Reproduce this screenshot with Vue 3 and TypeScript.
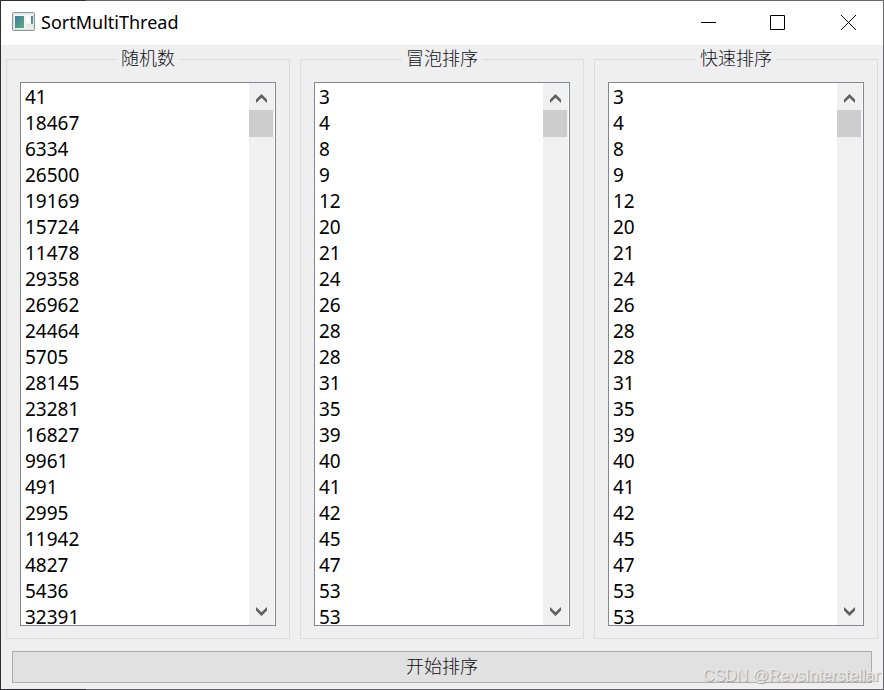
<script setup lang="ts">
import { ref } from 'vue'

interface Column {
  title: string
  values: number[]
}

const sorted = [3, 4, 8, 9, 12, 20, 21, 24, 26, 28, 28, 31, 35, 39, 40, 41, 42, 45, 47, 53, 53]

const columns: Column[] = [
  {
    title: '随机数',
    values: [
      41, 18467, 6334, 26500, 19169, 15724, 11478, 29358, 26962, 24464, 5705,
      28145, 23281, 16827, 9961, 491, 2995, 11942, 4827, 5436, 32391,
    ],
  },
  { title: '冒泡排序', values: sorted },
  { title: '快速排序', values: sorted },
]

const lists = ref<HTMLUListElement[]>([])

function scrollList(index: number, direction: number) {
  lists.value[index]?.scrollBy({ top: direction * 26 })
}
</script>

<template>
  <div class="window">
    <header class="titlebar">
      <svg class="app-icon" width="24" height="20" viewBox="0 0 24 20" aria-hidden="true">
        <defs>
          <linearGradient id="pane" x1="0" y1="0" x2="1" y2="1">
            <stop offset="0" stop-color="#3f7ba6" />
            <stop offset="1" stop-color="#5fae74" />
          </linearGradient>
        </defs>
        <rect x="0.5" y="0.5" width="22" height="18" rx="1" fill="#f2f2f2" stroke="#8f9599" />
        <rect x="1.5" y="1.5" width="20" height="16" fill="none" stroke="#dcdfe1" />
        <rect x="3" y="4" width="9" height="12" fill="url(#pane)" />
        <rect x="14" y="4" width="4" height="7" fill="#fff" />
        <rect x="14" y="12" width="7" height="4" fill="#e6e8e8" />
        <rect x="19" y="4" width="2" height="8" fill="url(#pane)" />
      </svg>
      <h1 class="title">SortMultiThread</h1>
      <div class="controls">
        <button type="button" class="control" aria-label="Minimize">
          <svg width="17" height="17" viewBox="0 0 17 17"><path d="M1 8.5h15" /></svg>
        </button>
        <button type="button" class="control" aria-label="Maximize">
          <svg width="17" height="17" viewBox="0 0 17 17"><path d="M0.5 1.5h14v14h-14z" /></svg>
        </button>
        <button type="button" class="control" aria-label="Close">
          <svg width="17" height="17" viewBox="0 0 17 17"><path d="M1 1l15 15M16 1l-15 15" /></svg>
        </button>
      </div>
    </header>

    <main class="body">
      <div class="groups">
        <fieldset v-for="(column, i) in columns" :key="column.title" class="group">
          <legend class="legend">{{ column.title }}</legend>
          <div class="listbox">
            <ul ref="lists" class="items">
              <li v-for="(value, n) in column.values" :key="n">{{ value }}</li>
            </ul>
            <div class="scrollbar">
              <button type="button" class="arrow" aria-label="Scroll up" @click="scrollList(i, -1)">
                <svg width="11" height="9" viewBox="0 0 11 9"><path d="M5.5 0L11 5.5V9L5.5 3.8L0 9V5.5z" /></svg>
              </button>
              <div class="thumb"></div>
              <button type="button" class="arrow down" aria-label="Scroll down" @click="scrollList(i, 1)">
                <svg width="11" height="9" viewBox="0 0 11 9"><path d="M5.5 9L0 3.5V0L5.5 5.2L11 0V3.5z" /></svg>
              </button>
            </div>
          </div>
        </fieldset>
      </div>
      <button type="button" class="start">开始排序</button>
    </main>
    <span class="watermark">CSDN @RevsInterstellar</span>
  </div>
</template>

<style>
body {
  margin: 0;
}
</style>

<style scoped>
.window {
  position: relative;
  display: flex;
  flex-direction: column;
  box-sizing: border-box;
  height: 100vh;
  padding: 1px;
  overflow: hidden;
  background: linear-gradient(90deg, #2e2d32 86px, #69686c 86px);
  color: #000;
  font-family: "Noto Sans", "Noto Sans CJK SC", sans-serif;
}

.titlebar {
  display: flex;
  align-items: flex-start;
  flex: none;
  height: 44px;
  padding-left: 11px;
  background: #fff;
}

.app-icon {
  flex: none;
  margin-top: 11px;
}

.title {
  flex: 1;
  margin: 0 0 0 5px;
  font-size: 18px;
  font-weight: 400;
  line-height: 42px;
}

.controls {
  display: flex;
}

.control {
  display: flex;
  align-items: center;
  justify-content: center;
  width: 70px;
  height: 43px;
  padding: 0;
  border: 0;
  background: none;
}

.control path {
  fill: none;
  stroke: #000;
  stroke-width: 1;
}

.body {
  display: flex;
  flex: 1;
  flex-direction: column;
  gap: 12px;
  min-height: 0;
  padding: 1px 5px 6px;
  background: #efefef;
}

.groups {
  display: grid;
  flex: 1;
  grid-template-columns: repeat(3, minmax(0, 1fr));
  grid-template-rows: minmax(0, 1fr);
  gap: 10px;
  min-height: 0;
}

.group {
  display: flex;
  flex-direction: column;
  box-sizing: border-box;
  min-width: 0;
  min-height: 0;
  margin: 0;
  padding: 10px 13px 12px;
  border: 1px solid #dcdcdc;
}

.legend {
  margin: 0 auto;
  padding: 0 4px 4px;
  color: #101018;
  font-family: "Noto Sans CJK SC", sans-serif;
  font-size: 18px;
  font-weight: 300;
  line-height: 22px;
}

.listbox {
  display: flex;
  flex: 1;
  min-height: 0;
  padding-right: 1px;
  border: 1px solid #828790;
  background: #fff;
}

.items {
  flex: 1;
  min-width: 0;
  margin: 0;
  padding: 1px 4px 0;
  overflow: hidden;
  list-style: none;
  font-size: 19px;
  line-height: 26px;
}

.scrollbar {
  display: flex;
  flex: none;
  flex-direction: column;
  width: 25px;
  background: #f0f0f0;
}

.arrow {
  display: flex;
  align-items: center;
  justify-content: center;
  height: 27px;
  padding: 4px 0 0;
  border: 0;
  background: none;
}

.arrow path {
  fill: #606060;
}

.thumb {
  width: 24px;
  height: 27px;
  background: #cdcdcd;
}

.down {
  margin-top: auto;
  padding: 0;
}

.start {
  flex: none;
  height: 32px;
  margin: 0 6px;
  padding: 0 0 4px;
  border: 1px solid #adadad;
  background: #e1e1e1;
  color: #101018;
  font-family: "Noto Sans CJK SC", sans-serif;
  font-size: 18px;
  font-weight: 300;
  line-height: 22px;
}

.watermark {
  position: absolute;
  right: 4px;
  bottom: 4px;
  color: #e8e8e8;
  font-family: "Liberation Sans", sans-serif;
  font-size: 16px;
  line-height: 20px;
  text-shadow: 1px 1px 1px #9a9a9a;
  white-space: nowrap;
  pointer-events: none;
}
</style>
